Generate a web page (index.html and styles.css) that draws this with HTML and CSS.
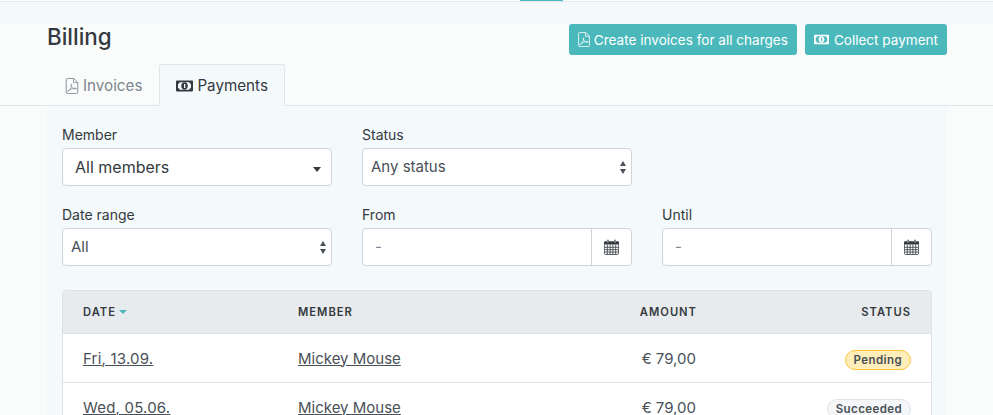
FILE: index.html
```html
<!DOCTYPE html>
<html lang="en">
<head>
<meta charset="utf-8">
<title>Billing</title>
<link rel="stylesheet" href="styles.css">
</head>
<body>
<svg class="defs" width="0" height="0" aria-hidden="true">
  <symbol id="i-pdf" viewBox="0 0 14 18">
    <path d="M1.500.5H9L13.500 5V16A1.500 1.500 0 0 1 12 17.500H2A1.500 1.500 0 0 1 .5 16V2A1.500 1.500 0 0 1 1.500.5Z" fill="none" stroke="currentColor"/>
    <path d="M8.700.8V5.200H13.200" fill="none" stroke="currentColor" stroke-width=".9"/>
    <path d="M2.200 15.200C4 14.600 5.800 11.600 6.600 8.200C6.900 6.800 6.200 6.400 6 7.400C5.600 9.600 7.800 12.400 11.800 12.400C12.400 12.400 12.200 11.400 11.200 11.400C8.600 11.400 4.200 12.800 2.800 14.400C2 15.200 2.200 15.600 2.200 15.200Z" fill="none" stroke="currentColor" stroke-width=".8"/>
  </symbol>
  <symbol id="i-money" viewBox="0 0 17 12">
    <path fill="currentColor" fill-rule="evenodd" d="M1 .5H16A1 1 0 0 1 17 1.500V10.500A1 1 0 0 1 16 11.500H1A1 1 0 0 1 0 10.500V1.500A1 1 0 0 1 1 .5ZM3.600 2.300C3.500 3.200 2.900 3.800 2 3.900V8.100C2.900 8.200 3.500 8.800 3.600 9.700H13.400C13.500 8.800 14.100 8.200 15 8.100V3.900C14.100 3.800 13.500 3.200 13.400 2.300Z"/>
    <path fill="currentColor" fill-rule="evenodd" d="M8.500 2.300C10.500 2.300 11.800 4 11.800 6C11.800 8 10.500 9.700 8.500 9.700C6.500 9.700 5.200 8 5.200 6C5.200 4 6.500 2.300 8.500 2.300ZM8 4H9.300V8H8Z"/>
  </symbol>
  <symbol id="i-cal" viewBox="0 0 15 16">
    <path fill="#343a40" d="M1.200 2.200H3V1.200C3 .6 4.800 .6 4.800 1.200V2.200H10.200V1.200C10.200 .6 12 .6 12 1.200V2.200H13.800C14.400 2.200 15 2.700 15 3.300V5.600H0V3.300C0 2.700 .6 2.200 1.200 2.200Z"/>
    <path fill="none" stroke="#343a40" stroke-width=".8" d="M.4 5.400V14.400C.4 15 .8 15.500 1.400 15.500H13.600C14.200 15.500 14.600 15 14.600 14.400V5.400M.4 8.300H14.600M.4 10.700H14.600M.4 13.100H14.600M3.300 5.600V15.500M6.100 5.600V15.500M8.900 5.600V15.500M11.700 5.600V15.500"/>
    <path fill="#fff" d="M3.500 1.200H4.300V3.600H3.500ZM10.700 1.200H11.500V3.600H10.700Z"/>
  </symbol>
</svg>

<header class="topbar"><span class="topbar-marker"></span></header>

<main class="page">
  <div class="title-row">
    <h1 class="title">Billing</h1>
    <div class="actions">
      <a class="btn"><svg class="btn-icon-pdf"><use href="#i-pdf"/></svg>Create invoices for all charges</a>
      <a class="btn"><svg class="btn-icon-money"><use href="#i-money"/></svg>Collect payment</a>
    </div>
  </div>

  <nav class="tabs">
    <a class="tab"><svg class="tab-icon-pdf"><use href="#i-pdf"/></svg>Invoices</a>
    <a class="tab tab-active"><svg class="tab-icon-money"><use href="#i-money"/></svg>Payments</a>
  </nav>

  <section class="panel">
    <form class="filters">
      <div class="field">
        <label class="label">Member</label>
        <div class="control control-search"><span>All members</span><span class="caret"></span></div>
      </div>
      <div class="field">
        <label class="label">Status</label>
        <div class="control"><span>Any status</span><span class="updown"></span></div>
      </div>
      <div class="field field-empty"></div>
      <div class="field">
        <label class="label">Date range</label>
        <div class="control"><span>All</span><span class="updown"></span></div>
      </div>
      <div class="field">
        <label class="label">From</label>
        <div class="control control-date"><span class="date-value">-</span><span class="date-btn"><svg class="cal"><use href="#i-cal"/></svg></span></div>
      </div>
      <div class="field">
        <label class="label">Until</label>
        <div class="control control-date"><span class="date-value">-</span><span class="date-btn"><svg class="cal"><use href="#i-cal"/></svg></span></div>
      </div>
    </form>

    <div class="table">
      <div class="row row-head">
        <div class="cell">Date<span class="sort"></span></div>
        <div class="cell">Member</div>
        <div class="cell cell-right cell-amount">Amount</div>
        <div class="cell cell-right">Status</div>
      </div>
      <div class="row">
        <div class="cell"><a class="link link-date">Fri, 13.09.</a></div>
        <div class="cell"><a class="link">Mickey Mouse</a></div>
        <div class="cell cell-right">€ 79,00</div>
        <div class="cell cell-right cell-badge"><span class="badge badge-pending">Pending</span></div>
      </div>
      <div class="row">
        <div class="cell"><a class="link link-date">Wed, 05.06.</a></div>
        <div class="cell"><a class="link">Mickey Mouse</a></div>
        <div class="cell cell-right">€ 79,00</div>
        <div class="cell cell-right cell-badge"><span class="badge badge-done">Succeeded</span></div>
      </div>
    </div>
  </section>
</main>
</body>
</html>
```

FILE: styles.css
```css
* { box-sizing: border-box; }
html, body { height: 415px; overflow: hidden; }
body {
  margin: 0;
  background: #fafcfc;
  color: #495057;
  font-family: Inter, "Liberation Sans", sans-serif;
  font-size: 15px;
  line-height: 22px;
}
.defs { position: absolute; }

.topbar {
  height: 23px;
  margin-top: 1px;
  background: #f4f9fc;
  border-top: 1px solid #e6e9ec;
  position: relative;
}
.topbar-marker {
  position: absolute;
  left: 520px;
  top: -2px;
  width: 43px;
  height: 1px;
  background: #4bb9bb;
}

.page { display: flex; flex-direction: column; }

.title-row {
  display: flex;
  justify-content: space-between;
  padding: 0 46px 0 47px;
  height: 40px;
}
.title {
  margin: 0;
  font-size: 22.400px;
  line-height: 26px;
  font-weight: 500;
  color: #343a40;
}
.actions { display: flex; gap: 8px; height: 31px; }
.btn {
  display: flex;
  align-items: center;
  padding: 0 9px;
  background: #4bb9bb;
  color: #fff;
  border-radius: 3px;
  font-size: 13.550px;
}
.btn-icon-pdf { width: 12px; height: 15px; margin-right: 4px; }
.btn-icon-money { width: 15px; height: 11px; margin-right: 5px; }

.tabs {
  display: flex;
  height: 42px;
  padding-left: 47px;
  border-bottom: 1px solid #e2e6ea;
}
.tab {
  display: flex;
  align-items: center;
  gap: 4px;
  height: 42px;
  padding: 1px 16px 0 17px;
  color: #7d868e;
  font-size: 15.200px;
  border: 1px solid transparent;
  border-radius: 3px 3px 0 0;
}
.tab-active {
  padding: 1px 16px 0;
  color: #343a40;
  background: #f4f9fc;
  border-color: #e2e6ea #e2e6ea #f4f9fc;
}
.tab-icon-pdf { width: 14px; height: 16px; }
.tab-icon-money { width: 17px; height: 12px; }

.panel {
  margin: 0 46px 0 47px;
  padding: 18px 15px 0;
  background: #f4f9fc;
  flex: 1;
}

.filters {
  display: grid;
  grid-template-columns: 270px 270px 270px;
  column-gap: 30px;
  row-gap: 18px;
}
.label {
  display: block;
  height: 24px;
  font-size: 14px;
  line-height: 22px;
  color: #343a40;
}
.control {
  position: relative;
  display: flex;
  align-items: center;
  justify-content: space-between;
  height: 38px;
  padding: 0 4px 0 8px;
  background: #fff;
  border: 1px solid #ced4da;
  border-radius: 4px;
  font-size: 15px;
}
.control-search { padding: 0 10px 0 12px; color: #343a40; font-size: 16px; }
.caret {
  width: 0; height: 0;
  margin-top: 4px;
  border-left: 4.500px solid transparent;
  border-right: 4.500px solid transparent;
  border-top: 5px solid #343a40;
}
.updown { display: flex; flex-direction: column; gap: 3px; width: 7px; }
.updown::before, .updown::after {
  content: "";
  width: 0; height: 0;
  border-left: 3.500px solid transparent;
  border-right: 3.500px solid transparent;
}
.updown::before { border-bottom: 5px solid #495057; }
.updown::after { border-top: 5px solid #495057; }

.control-date { padding: 0; align-items: stretch; }
.date-value { padding: 0 12px; line-height: 36px; color: #7d868e; }
.date-btn {
  display: flex;
  align-items: center;
  justify-content: center;
  width: 40px;
  border-left: 1px solid #ced4da;
}
.cal { width: 15px; height: 16px; }

.table {
  margin-top: 24px;
  background: #fff;
  border: 1px solid #dee2e6;
  border-radius: 4px 4px 0 0;
}
.row {
  display: grid;
  grid-template-columns: 215px 215px 183px 215px;
  align-items: center;
  height: 49px;
  padding: 1px 20px 0;
  border-bottom: 1px solid #dee2e6;
}
.row-head {
  height: 43px;
  padding-top: 0;
  background: #e8ebee;
  border-radius: 3px 3px 0 0;
  color: #343a40;
  font-size: 11.200px;
  font-weight: 600;
  letter-spacing: 1px;
  text-transform: uppercase;
}
.cell-amount { margin-right: -1px; }
.cell-right { text-align: right; }
.cell-badge { padding-top: 2px; }
.link { text-decoration: underline; text-underline-offset: 1px; text-decoration-thickness: 1px; }
.link-date { letter-spacing: .2px; }
.sort {
  display: inline-block;
  vertical-align: 2px;
  margin-left: 3px;
  width: 0; height: 0;
  border: 4px solid transparent;
  border-top: 4px solid #4bb9bb;
  border-bottom: 0;
}
.badge {
  display: inline-block;
  padding: 0 8px;
  height: 20px;
  border-radius: 10px;
  font-size: 11.500px;
  line-height: 18px;
  font-weight: 600;
  letter-spacing: .4px;
  vertical-align: middle;
}
.badge-pending { background: #ffeeba; border: 1px solid #ffc53d; }
.badge-done { background: #f4f6f8; border: 1px solid #dee2e6; }
```
